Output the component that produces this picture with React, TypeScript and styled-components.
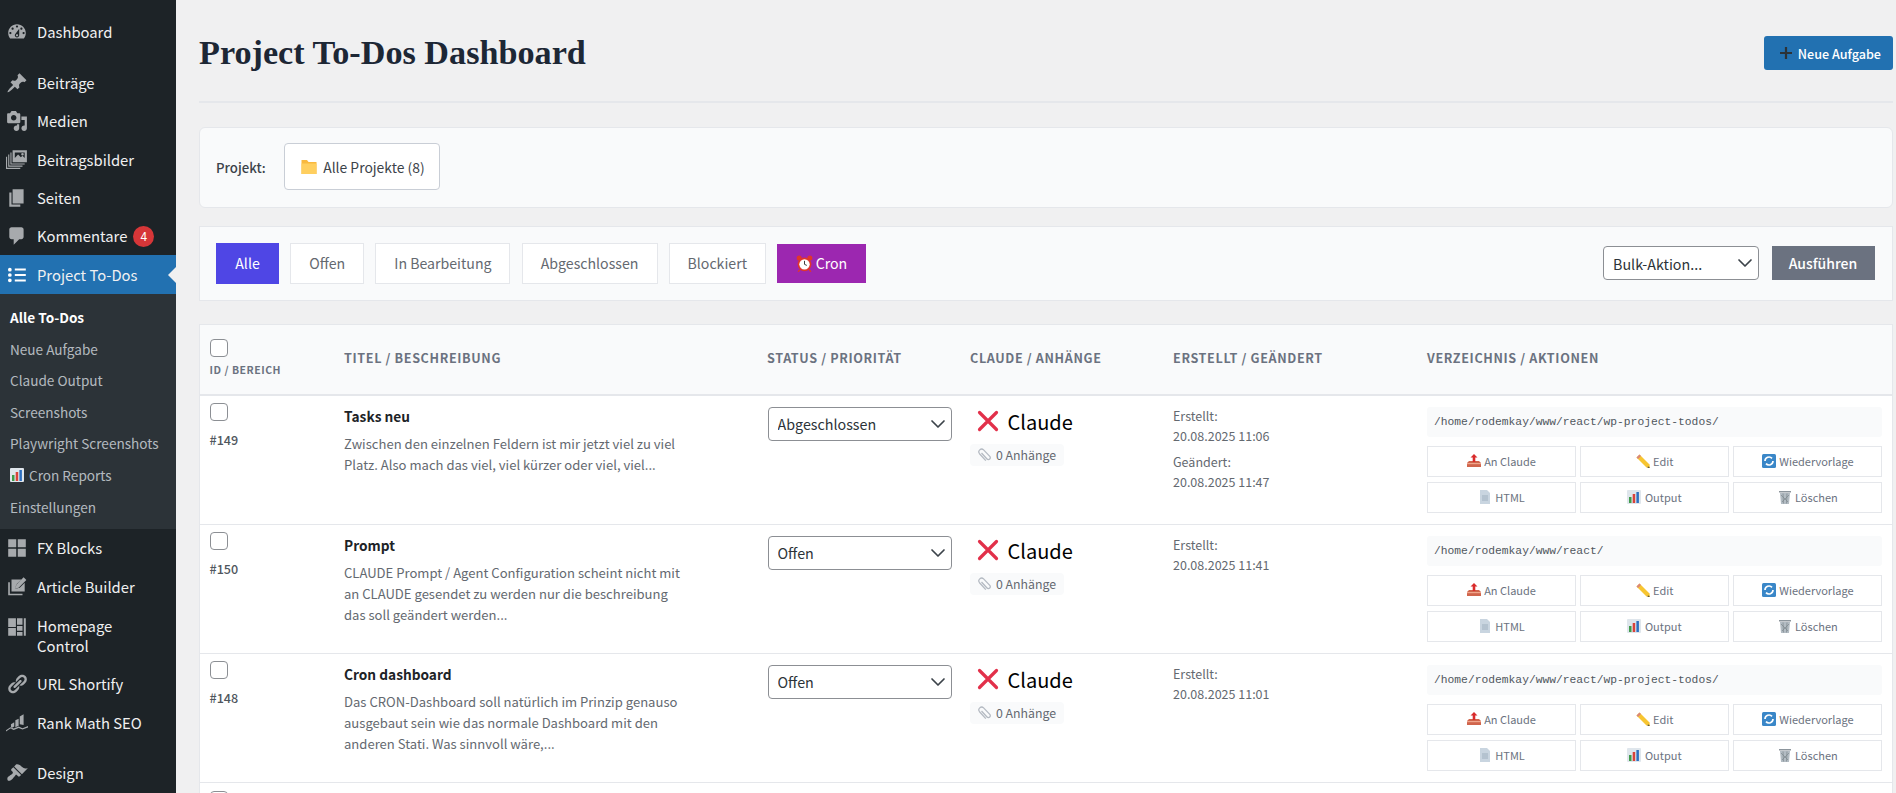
import React from "react";
import styled, { createGlobalStyle } from "styled-components";
import { ChevronDown } from "lucide-react";

const GlobalStyle = createGlobalStyle`
  html, body {
    margin: 0;
    height: 793px;
    overflow: hidden;
    background: #f0f0f1;
  }
  * { box-sizing: border-box; }
  body {
    font-family: "Noto Sans CJK SC", "Noto Sans", sans-serif;
    color: #1d2327;
  }
`;

const Page = styled.div`
  display: flex;
  height: 793px;
  overflow: hidden;
`;

/* admin sidebar */
const Sidebar = styled.nav`
  width: 176px;
  flex: none;
  background: #1d2327;
  padding-top: 13px;
  font-size: 14.8px;
`;
const MenuItem = styled.div<{ $active?: boolean; $gap?: boolean; $tall?: boolean }>`
  display: flex;
  align-items: ${p => (p.$tall ? "flex-start" : "center")};
  min-height: ${p => (p.$tall ? "59px" : "38.4px")};
  padding: ${p => (p.$tall ? "10.5px" : "0")} 0 0 6px;
  margin-top: ${p => (p.$gap ? "12px" : "0")};
  line-height: 19.5px;
  color: #f0f0f1;
  position: relative;
  background: ${p => (p.$active ? "#2271b1" : "transparent")};
  svg.menu-icon {
    flex: none;
    width: 22px;
    height: 22px;
    margin-right: 9px;
    fill: ${p => (p.$active ? "#fff" : "#a7aaad")};
  }
`;
const ActiveArrow = styled.span`
  position: absolute;
  right: 0;
  top: 50%;
  margin-top: -8px;
  border: 8px solid transparent;
  border-right-color: #f0f0f1;
  border-left-width: 0;
`;
const Count = styled.span`
  display: inline-flex;
  align-items: center;
  justify-content: center;
  width: 21px;
  height: 21px;
  margin-left: 6px;
  border-radius: 50%;
  background: #d63638;
  color: #fff;
  font-size: 12px;
`;
const SubMenu = styled.div`
  background: #2c3338;
  padding: 7.5px 0 6.5px;
`;
const SubItem = styled.div<{ $current?: boolean }>`
  display: flex;
  align-items: center;
  gap: 5px;
  height: 31.6px;
  padding-left: 10px;
  font-size: 13.6px;
  color: ${p => (p.$current ? "#fff" : "rgba(240,246,252,.7)")};
  font-weight: ${p => (p.$current ? 700 : 400)};
`;

const Main = styled.main`
  flex: 1;
  min-width: 0;
  padding: 0 3.5px 0 23px;
`;
const Header = styled.header`
  display: flex;
  align-items: center;
  justify-content: space-between;
  height: 103px;
  padding-top: 5px;
  border-bottom: 2px solid #e5e7eb;
  margin-bottom: 23.5px;
`;
const Title = styled.h1`
  margin: 0;
  font-family: "Liberation Serif", serif;
  font-size: 34.2px;
  font-weight: 700;
  color: #1d2735;
`;
const NewButton = styled.button`
  display: flex;
  align-items: center;
  gap: 5px;
  height: 34px;
  padding: 0 11.5px 0 15px;
  border: 0;
  border-radius: 3px;
  background: #2271b1;
  color: #fff;
  font: 500 12.6px "Noto Sans CJK SC", sans-serif;
`;
const PlusMark = styled.svg`
  width: 14px;
  height: 14px;
  stroke: #2c3338;
  stroke-width: 2.2;
`;
const Panel = styled.section<{ $wide?: boolean }>`
  display: flex;
  align-items: center;
  background: #f9fafb;
  border: 1px solid #e5e7eb;
  border-radius: ${p => (p.$wide ? "0" : "6px")};
  height: ${p => (p.$wide ? "75px" : "81px")};
  margin-bottom: ${p => (p.$wide ? "23.5px" : "18px")};
  padding: 0 17px 0 16px;
`;
const PanelLabel = styled.span`
  font-size: 13.2px;
  font-weight: 500;
  color: #3c434a;
  margin-right: 18.5px;
`;
const ProjectButton = styled.button`
  display: flex;
  align-items: center;
  gap: 6px;
  width: 156px;
  height: 47px;
  margin-top: -1px;
  padding: 0 16px;
  background: #fff;
  border: 1px solid #c9ced6;
  border-radius: 4px;
  font: 400 13.9px "Noto Sans CJK SC", sans-serif;
  color: #3c434a;
  white-space: nowrap;
`;
const FilterRow = styled.div`
  display: flex;
  align-items: center;
  gap: 11.2px;
`;
const Filter = styled.button<{ $kind?: "active" | "cron"; $width: number }>`
  display: flex;
  align-items: center;
  justify-content: center;
  gap: 3px;
  width: ${p => p.$width}px;
  height: ${p => (p.$kind === "cron" ? "39px" : "41px")};
  padding: 0;
  font: 400 14.15px "Noto Sans CJK SC", sans-serif;
  border: ${p => (p.$kind ? "0" : "1px solid #e5e7eb")};
  background: ${p =>
    p.$kind === "active" ? "#4f46e5" : p.$kind === "cron" ? "#9c27b0" : "#fff"};
  color: ${p => (p.$kind ? "#fff" : "#646970")};
`;
const BulkRow = styled.div`
  display: flex;
  align-items: center;
  gap: 12.5px;
  margin-left: auto;
`;
const SelectWrap = styled.div<{ $width: number }>`
  position: relative;
  width: ${p => p.$width}px;
  height: 34px;
  svg {
    position: absolute;
    right: 2px;
    top: 5px;
    width: 24px;
    height: 24px;
    color: #3c434a;
    pointer-events: none;
  }
`;
const Select = styled.select`
  appearance: none;
  width: 100%;
  height: 100%;
  padding: 0 24px 0 9px;
  background: #fff;
  border: 1px solid #8c8f94;
  border-radius: 4px;
  font: 400 14.3px "Noto Sans CJK SC", sans-serif;
  color: #2c3338;
`;
const RunButton = styled.button`
  width: 103px;
  height: 34px;
  border: 0;
  background: #6b7280;
  color: #fff;
  font: 500 14px "Noto Sans CJK SC", sans-serif;
`;

/* task table */
const Table = styled.div`
  border: 1px solid #e5e7eb;
  border-bottom: 0;
  background: #fff;
`;
const gridColumns = "134.5px 423px 203px 203px 254px 1fr";
const HeadRow = styled.div`
  display: grid;
  grid-template-columns: ${gridColumns};
  align-items: center;
  height: 70.5px;
  padding-bottom: 3px;
  background: #f9fafb;
  border-bottom: 2px solid #e5e7eb;
`;
const HeadCell = styled.div`
  padding-left: 9.5px;
  font-size: 12.6px;
  font-weight: 600;
  letter-spacing: 0.63px;
  text-transform: uppercase;
  color: #6b7280;
  white-space: nowrap;
`;
const HeadId = styled.div`
  font-size: 10.5px;
  font-weight: 600;
  letter-spacing: 0.52px;
  color: #6b7280;
  margin-top: 6px;
  line-height: 14px;
`;
const Check = styled.input.attrs({ type: "checkbox" })`
  appearance: none;
  display: block;
  width: 18px;
  height: 18px;
  margin: 0;
  border: 1px solid #8c8f94;
  border-radius: 4px;
  background: #fff;
`;
const Row = styled.div`
  display: grid;
  grid-template-columns: ${gridColumns};
  height: 129.2px;
  border-bottom: 1px solid #e5e7eb;
`;
const Cell = styled.div`
  padding: 7.5px 9.5px 0;
  min-width: 0;
`;
const IdText = styled.div`
  margin-top: 10px;
  font-size: 12.6px;
  font-weight: 500;
  line-height: 17px;
  color: #50575e;
`;
const TaskTitle = styled.div`
  margin-top: 2.5px;
  font-size: 13.7px;
  font-weight: 600;
  line-height: 20px;
  color: #1d2327;
`;
const TaskText = styled.div`
  margin-top: 7px;
  font-size: 13.07px;
  line-height: 21px;
  color: #646970;
  white-space: nowrap;
`;
const StatusCell = styled(Cell)`
  padding-top: 11px;
  padding-left: 10px;
`;
const ClaudeLine = styled.div`
  display: flex;
  align-items: center;
  gap: 8.500px;
  height: 26px;
  margin: 5px 0 0 7px;
  font-size: 20px;
  color: #000;
`;
const Attachments = styled.div`
  display: flex;
  align-items: center;
  gap: 4px;
  width: fit-content;
  height: 22px;
  margin-top: 10px;
  padding: 0 8px;
  background: #f9fafb;
  border-radius: 4px;
  font-size: 12.3px;
  color: #646970;
`;
const DateCell = styled(Cell)`
  padding-top: 10px;
  font-size: 12.5px;
  line-height: 20.5px;
  color: #646970;
`;
const DateBlock = styled.div`
  margin-bottom: 5px;
`;
const PathCell = styled(Cell)`
  padding-top: 11.5px;
`;
const PathBox = styled.div`
  height: 30px;
  display: flex;
  align-items: center;
  padding: 0 7px;
  background: #f9fafb;
  border-radius: 3px;
  font: 400 11.3px "Liberation Mono", monospace;
  color: #50575e;
`;
const Actions = styled.div`
  display: grid;
  grid-template-columns: repeat(3, 1fr);
  gap: 5px 4.5px;
  margin-top: 9px;
`;
const Action = styled.button`
  display: flex;
  align-items: center;
  justify-content: center;
  gap: 3.5px;
  height: 31px;
  padding: 0 0 1px;
  background: #fff;
  border: 1px solid #e5e7eb;
  font: 400 11px "Noto Sans CJK SC", sans-serif;
  color: #6b7280;
`;
const Glyph = styled.svg<{ $size?: number }>`
  flex: none;
  width: ${p => p.$size ?? 14}px;
  height: ${p => p.$size ?? 14}px;
`;

const menuPaths: Record<string, string> = {
  dashboard:
    "M3.76 16h12.48c1.1-1.37 1.76-3.11 1.76-5 0-4.42-3.58-8-8-8s-8 3.58-8 8c0 1.89.66 3.63 1.76 5zM10 4c.55 0 1 .45 1 1s-.45 1-1 1-1-.45-1-1 .45-1 1-1zM6 6c.55 0 1 .45 1 1s-.45 1-1 1-1-.45-1-1 .45-1 1-1zm8 0c.55 0 1 .45 1 1s-.45 1-1 1-1-.45-1-1 .45-1 1-1zm-5.37 5.55L12 7v6c0 1.1-.9 2-2 2s-2-.9-2-2c0-.57.24-1.08.63-1.45zM4 10c.55 0 1 .45 1 1s-.45 1-1 1-1-.45-1-1 .45-1 1-1zm12 0c.55 0 1 .45 1 1s-.45 1-1 1-1-.45-1-1 .45-1 1-1zm-5 3c0-.55-.45-1-1-1s-1 .45-1 1 .45 1 1 1 1-.45 1-1z",
  post: "M10.44 3.02l1.82-1.82 6.36 6.35-1.83 1.82c-1.05-.68-2.48-.57-3.41.36l-.75.75c-.92.93-1.04 2.35-.35 3.41l-1.83 1.82-2.41-2.41-2.8 2.79c-.42.42-3.38 2.71-3.8 2.29s1.86-3.39 2.28-3.81l2.79-2.79L4.1 9.36l1.83-1.82c1.05.69 2.48.57 3.4-.36l.75-.75c.93-.92 1.05-2.35.36-3.41z",
  media:
    "M13 11V4c0-.55-.45-1-1-1h-1.67L9 1H5L3.67 3H2c-.55 0-1 .45-1 1v7c0 .55.45 1 1 1h10c.55 0 1-.45 1-1zM7 4.5c1.38 0 2.5 1.12 2.5 2.5S8.38 9.5 7 9.5 4.5 8.38 4.5 7 5.62 4.5 7 4.5zM14 6h5v10.5c0 1.38-1.12 2.5-2.5 2.5S14 17.88 14 16.5s1.12-2.5 2.5-2.5c.17 0 .34.02.5.05V9h-3V6zm-4 8.05V13h2v3.5c0 1.38-1.12 2.5-2.5 2.5S7 17.88 7 16.5 8.12 14 9.5 14c.17 0 .34.02.5.05z",
  images:
    "M6 2h13v11H6V2zm2 2v5l3-3 2.5 2.5L15 7l2 2V4H8zm7 .5a1.2 1.2 0 1 1 0 2.4 1.2 1.2 0 0 1 0-2.4zM4 4h1v10h12v1H4V4zM2 6h1v10h12v1H2V6zM1 8v10h12v1H0V8h1z",
  page: "M6 15V2h10v13H6zm-1 1h8v2H3V5h2v11z",
  comments: "M5 2h9c1.1 0 2 .9 2 2v7c0 1.1-.9 2-2 2h-2l-5 5v-5H5c-1.1 0-2-.9-2-2V4c0-1.1.9-2 2-2z",
  list: "M3.5 3.5a1.7 1.7 0 1 1 0 3.4 1.7 1.7 0 0 1 0-3.4zM8 4.2h10v1.8H8V4.2zM3.5 8.3a1.7 1.7 0 1 1 0 3.4 1.7 1.7 0 0 1 0-3.4zM8 9.1h10v1.8H8V9.1zM3.5 13.1a1.7 1.7 0 1 1 0 3.4 1.7 1.7 0 0 1 0-3.4zM8 14h10v1.8H8V14z",
  grid: "M2 2h7.3v7.3H2V2zm8.7 0H18v7.3h-7.3V2zM2 10.7h7.3V18H2v-7.3zm8.7 0H18V18h-7.3v-7.3z",
  article:
    "M5 4h9l-4.500 4.500-1 4 4-1 4.500-4.500V15H5V4zM2 6.500h1.500V17H15v1.500H2V6.500zM16 2l2.500 2.500-7 7-3 .7.7-3L16 2z",
  home: "M2 2h7v8H2V2zm8 0h5v6h-5V2zm6.200 0H18v16h-1.800V2zM2 11h7v7H2v-7zm8-2h5v4.500h-5V9zm0 5.500h5V18h-5v-3.500z",
  links:
    "M17.74 2.76c1.68 1.69 1.68 4.41 0 6.1l-1.53 1.52c-1.12 1.12-2.7 1.47-4.14 1.09l2.62-2.61.76-.77.76-.76c.84-.84.84-2.2 0-3.04-.84-.85-2.2-.85-3.04 0l-.77.76-3.38 3.38c-.37-1.44-.02-3.02 1.1-4.14l1.52-1.53c1.69-1.68 4.42-1.68 6.1 0zM8.59 13.43l5.34-5.34c.42-.42.42-1.1 0-1.52-.44-.43-1.13-.39-1.53 0l-5.33 5.34c-.42.42-.42 1.1 0 1.52.44.43 1.13.39 1.52 0zm-.76 2.29l4.14-4.15c.38 1.44.03 3.02-1.09 4.14l-1.52 1.53c-1.69 1.68-4.41 1.68-6.1 0-1.68-1.68-1.68-4.42 0-6.1l1.53-1.52c1.12-1.12 2.7-1.47 4.14-1.1l-4.14 4.15c-.85.84-.85 2.2 0 3.05.84.84 2.2.84 3.04 0z",
  rank: "M0 17.500l4-2.800 3 1.300 4.500-1.800 3.500 1.500 5-2v1.200l-5 2-3.500-1.500-4.500 1.800-3-1.300-4 2.800v-1zM4.500 12l3-1.800v4l-3 1.600V12zm4-3.500l3-1.500v6.500l-3 1.200V8.500zm4-3.500l3.500-2v9.800l-3.500-.800V5z",
  brush:
    "M14.48 11.06L7.41 3.99l1.5-1.5c.5-.56 2.3-.47 3.51.32 1.21.8 1.43 1.28 2.91 2.1 1.18.64 2.45 1.26 4.45.85zm-.71.71L6.7 4.7 4.93 6.47c-.39.39-.39 1.02 0 1.41l1.06 1.06c.39.39.39 1.03 0 1.42-.6.6-1.43 1.11-2.21 1.69-.35.26-.7.53-1.01.84C1.43 13.23.75 15.04 1.5 16.5s3.27.01 4.57-1.29c.31-.31.58-.66.84-1.01.58-.78 1.09-1.61 1.69-2.21.39-.39 1.02-.39 1.41 0l1.06 1.06c.39.39 1.02.39 1.41 0z",
};

const MenuIcon = ({ name }: { name: string }) => (
  <svg className="menu-icon" viewBox="0 0 20 20">
    <path fillRule="evenodd" d={menuPaths[name]} />
  </svg>
);

const FolderIcon = () => (
  <Glyph $size={16} viewBox="0 0 16 16">
    <path d="M.5 1h5.500l1.500 2h8v12H.5z" fill="#f9b93f" />
    <path d="M.5 4.500h15V15H.5z" fill="#ffcf5f" />
  </Glyph>
);
const ClockIcon = () => (
  <Glyph $size={17} viewBox="0 0 16 16">
    <circle cx="3" cy="2.800" r="2.400" fill="#e0362c" />
    <circle cx="13" cy="2.800" r="2.400" fill="#e0362c" />
    <path d="M3.500 14l-1.500 1.800M12.500 14l1.500 1.800" stroke="#e0362c" strokeWidth="1.400" />
    <circle cx="8" cy="8.800" r="6.500" fill="#e0362c" />
    <circle cx="8" cy="8.800" r="4.900" fill="#fff" />
    <path d="M8 5.500v3.300l2.200 1" stroke="#333" strokeWidth=".9" fill="none" />
  </Glyph>
);
const CrossIcon = () => (
  <Glyph $size={22} viewBox="0 0 22 22">
    <path d="M2.500 2.500l17 17M19.500 2.500l-17 17" stroke="#e2304a" strokeWidth="3.200" strokeLinecap="round" />
  </Glyph>
);
const ClipIcon = () => (
  <Glyph $size={14} viewBox="0 0 14 14">
    <path
      d="M3.500 5l5.500 6a1.900 1.900 0 0 0 2.800-2.600L5.600 1.900a2.800 2.800 0 0 0-4.100 3.800l6.300 6.900"
      stroke="#b4bac2"
      strokeWidth="1.300"
      fill="none"
    />
  </Glyph>
);
const OutboxIcon = () => (
  <Glyph viewBox="0 0 14 14">
    <path d="M0 9l2-2h10l2 2v4H0z" fill="#d0654c" />
    <path d="M0 9h14v1.200H0z" fill="#f0a58c" />
    <path d="M7 0l3.500 3.500H8.300V8H5.700V3.500H3.500z" fill="#d92b2b" />
  </Glyph>
);
const PencilIcon = () => (
  <Glyph viewBox="0 0 14 14">
    <path d="M3.500 .5l10 10 .5 3.500-3.500-.5-10-10z" fill="#f7c531" />
    <path d="M5 2l-3 3-1.500-1.500 3-3z" fill="#d9867c" />
    <path d="M12 12.300l2 1.700-2.500-.3z" fill="#444" />
  </Glyph>
);
const RefreshIcon = () => (
  <Glyph viewBox="0 0 14 14">
    <rect width="14" height="14" rx="1.500" fill="#3a87c8" />
    <path d="M3 7a4 4 0 0 1 7-2.600M11 7a4 4 0 0 1-7 2.600" stroke="#fff" strokeWidth="1.700" fill="none" />
  </Glyph>
);
const DocIcon = () => (
  <Glyph viewBox="0 0 14 14">
    <path d="M2 0h7l3 3v11H2z" fill="#c9d5e0" />
    <path d="M4 6h6M4 8h6M4 10h6" stroke="#9fb0bf" strokeWidth="1" />
  </Glyph>
);
const ChartIcon = () => (
  <Glyph viewBox="0 0 14 14">
    <rect width="14" height="14" rx="1" fill="#dfe6ec" />
    <rect x="2" y="7" width="2.500" height="6" fill="#3f9b4b" />
    <rect x="5.700" y="4" width="2.500" height="9" fill="#d9423a" />
    <rect x="9.400" y="2" width="2.500" height="11" fill="#2d6fc0" />
  </Glyph>
);
const TrashIcon = () => (
  <Glyph viewBox="0 0 14 14">
    <path d="M1 1h12v1.500H1z" fill="#8c959c" />
    <path d="M2 3h10l-1 11H3z" fill="#b3bcc3" />
    <path d="M3 5l7 7M11 5l-7 7M5 3.500l.500 10M9 3.500l-.500 10" stroke="#7d868d" strokeWidth=".7" />
  </Glyph>
);

interface Task {
  id: number;
  title: string;
  text: string[];
  status: string;
  created: string;
  changed?: string;
  path: string;
}

const tasks: Task[] = [
  {
    id: 149,
    title: "Tasks neu",
    text: ["Zwischen den einzelnen Feldern ist mir jetzt viel zu viel", "Platz. Also mach das viel, viel kürzer oder viel, viel..."],
    status: "Abgeschlossen",
    created: "20.08.2025 11:06",
    changed: "20.08.2025 11:47",
    path: "/home/rodemkay/www/react/wp-project-todos/",
  },
  {
    id: 150,
    title: "Prompt",
    text: ["CLAUDE Prompt / Agent Configuration scheint nicht mit", "an CLAUDE gesendet zu werden nur die beschreibung", "das soll geändert werden..."],
    status: "Offen",
    created: "20.08.2025 11:41",
    path: "/home/rodemkay/www/react/",
  },
  {
    id: 148,
    title: "Cron dashboard",
    text: ["Das CRON-Dashboard soll natürlich im Prinzip genauso", "ausgebaut sein wie das normale Dashboard mit den", "anderen Stati. Was sinnvoll wäre,..."],
    status: "Offen",
    created: "20.08.2025 11:01",
    path: "/home/rodemkay/www/react/wp-project-todos/",
  },
];

const TaskRow: React.FC<Task> = ({ id, title, text, status, created, changed, path }) => (
  <Row>
    <Cell>
      <Check />
      <IdText>#{id}</IdText>
    </Cell>
    <Cell>
      <TaskTitle>{title}</TaskTitle>
      <TaskText>
        {text.map(line => (
          <div key={line}>{line}</div>
        ))}
      </TaskText>
    </Cell>
    <StatusCell>
      <SelectWrap $width={184.5}>
        <Select defaultValue={status}>
          <option>{status}</option>
        </Select>
        <ChevronDown strokeWidth={1.7} />
      </SelectWrap>
    </StatusCell>
    <Cell>
      <ClaudeLine>
        <CrossIcon />
        Claude
      </ClaudeLine>
      <Attachments>
        <ClipIcon />0 Anhänge
      </Attachments>
    </Cell>
    <DateCell>
      <DateBlock>
        Erstellt:
        <br />
        {created}
      </DateBlock>
      {changed && (
        <DateBlock>
          Geändert:
          <br />
          {changed}
        </DateBlock>
      )}
    </DateCell>
    <PathCell>
      <PathBox>{path}</PathBox>
      <Actions>
        <Action><OutboxIcon />An Claude</Action>
        <Action><PencilIcon />Edit</Action>
        <Action><RefreshIcon />Wiedervorlage</Action>
        <Action><DocIcon />HTML</Action>
        <Action><ChartIcon />Output</Action>
        <Action><TrashIcon />Löschen</Action>
      </Actions>
    </PathCell>
  </Row>
);

export default function App() {
  return (
    <Page>
      <GlobalStyle />
      <Sidebar>
        <MenuItem><MenuIcon name="dashboard" />Dashboard</MenuItem>
        <MenuItem $gap><MenuIcon name="post" />Beiträge</MenuItem>
        <MenuItem><MenuIcon name="media" />Medien</MenuItem>
        <MenuItem><MenuIcon name="images" />Beitragsbilder</MenuItem>
        <MenuItem><MenuIcon name="page" />Seiten</MenuItem>
        <MenuItem><MenuIcon name="comments" />Kommentare<Count>4</Count></MenuItem>
        <MenuItem $active><MenuIcon name="list" />Project To-Dos<ActiveArrow /></MenuItem>
        <SubMenu>
          <SubItem $current>Alle To-Dos</SubItem>
          <SubItem>Neue Aufgabe</SubItem>
          <SubItem>Claude Output</SubItem>
          <SubItem>Screenshots</SubItem>
          <SubItem>Playwright Screenshots</SubItem>
          <SubItem><ChartIcon />Cron Reports</SubItem>
          <SubItem>Einstellungen</SubItem>
        </SubMenu>
        <MenuItem><MenuIcon name="grid" />FX Blocks</MenuItem>
        <MenuItem><MenuIcon name="article" />Article Builder</MenuItem>
        <MenuItem $tall>
          <MenuIcon name="home" />
          <span>Homepage<br />Control</span>
        </MenuItem>
        <MenuItem><MenuIcon name="links" />URL Shortify</MenuItem>
        <MenuItem><MenuIcon name="rank" />Rank Math SEO</MenuItem>
        <MenuItem $gap><MenuIcon name="brush" />Design</MenuItem>
      </Sidebar>
      <Main>
        <Header>
          <Title>Project To-Dos Dashboard</Title>
          <NewButton>
            <PlusMark viewBox="0 0 14 14"><path d="M7 1v12M1 7h12" /></PlusMark>
            Neue Aufgabe
          </NewButton>
        </Header>
        <Panel>
          <PanelLabel>Projekt:</PanelLabel>
          <ProjectButton><FolderIcon />Alle Projekte (8)</ProjectButton>
        </Panel>
        <Panel $wide>
          <FilterRow>
            <Filter $kind="active" $width={63}>Alle</Filter>
            <Filter $width={74}>Offen</Filter>
            <Filter $width={135}>In Bearbeitung</Filter>
            <Filter $width={136}>Abgeschlossen</Filter>
            <Filter $width={97}>Blockiert</Filter>
            <Filter $kind="cron" $width={89}><ClockIcon />Cron</Filter>
          </FilterRow>
          <BulkRow>
            <SelectWrap $width={156}>
              <Select defaultValue="Bulk-Aktion...">
                <option>Bulk-Aktion...</option>
              </Select>
              <ChevronDown strokeWidth={1.7} />
            </SelectWrap>
            <RunButton>Ausführen</RunButton>
          </BulkRow>
        </Panel>
        <Table>
          <HeadRow>
            <HeadCell>
              <Check />
              <HeadId>ID / BEREICH</HeadId>
            </HeadCell>
            <HeadCell>Titel / Beschreibung</HeadCell>
            <HeadCell>Status / Priorität</HeadCell>
            <HeadCell>Claude / Anhänge</HeadCell>
            <HeadCell>Erstellt / Geändert</HeadCell>
            <HeadCell>Verzeichnis / Aktionen</HeadCell>
          </HeadRow>
          {tasks.map(task => (
            <TaskRow key={task.id} {...task} />
          ))}
          <Row>
            <Cell><Check /></Cell>
          </Row>
        </Table>
      </Main>
    </Page>
  );
}
